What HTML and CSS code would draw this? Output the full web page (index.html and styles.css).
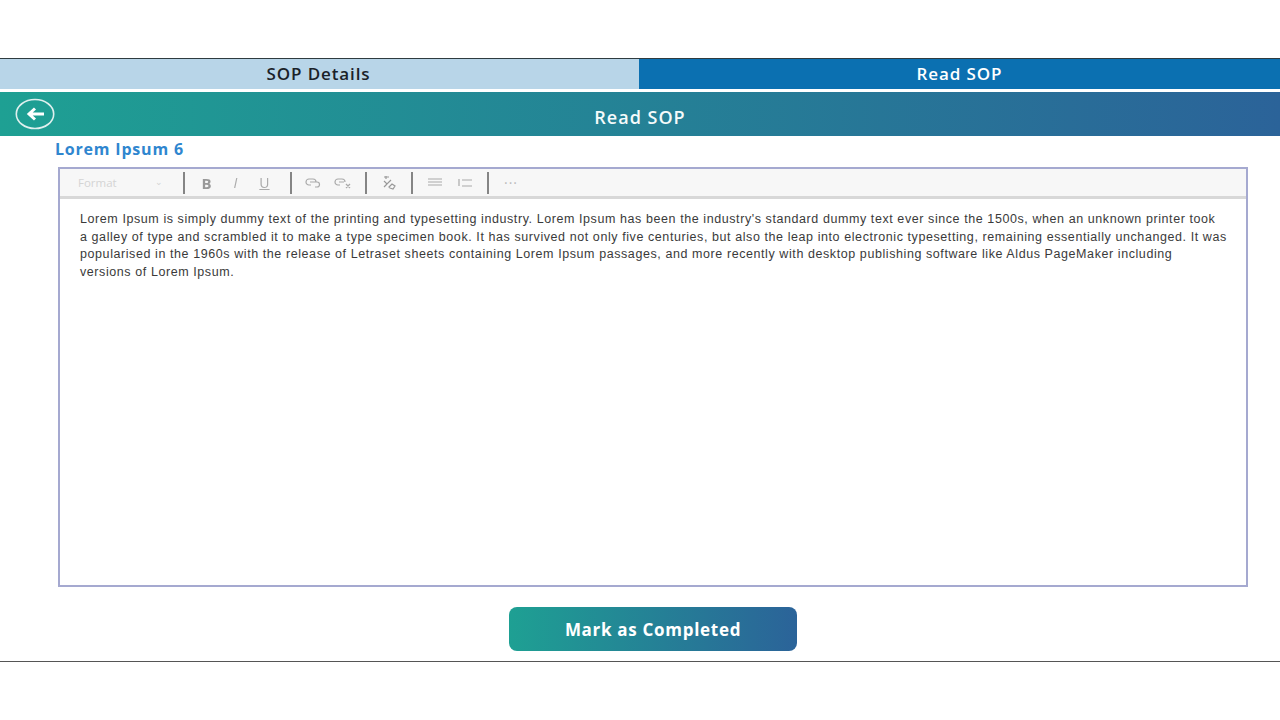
FILE: index.html
```html
<!DOCTYPE html>
<html lang="en">
<head>
  <meta charset="UTF-8">
  <meta name="viewport" content="width=device-width, initial-scale=1.0">
  <title>Read SOP</title>
  <link rel="stylesheet" href="styles.css">
</head>
<body>
  <div class="screen">
    <div class="tabs">
      <div class="tab tab-light">SOP Details</div>
      <div class="tab tab-active">Read SOP</div>
    </div>

    <div class="header">
      <button class="back" aria-label="Back">
        <svg width="40" height="32" viewBox="0 0 40 32">
          <ellipse cx="20" cy="16" rx="18.7" ry="14.5" fill="none" stroke="#dff0ee" stroke-width="1.6"/>
          <path d="M29 16H14M20 10.500L14 16l6 5.500" fill="none" stroke="#fff" stroke-width="3"/>
        </svg>
      </button>
      <div class="header-title">Read SOP</div>
    </div>

    <div class="doc-title">Lorem Ipsum 6</div>

    <div class="editor">
      <div class="toolbar">
        <div class="format">Format <span class="caret">&#8964;</span></div>
        <span class="sep"></span>
        <div class="tools tools-text">
          <b class="tool-b">B</b>
          <i class="tool-i">I</i>
          <u class="tool-u">U</u>
        </div>
        <span class="sep"></span>
        <div class="tools tools-link">
          <svg width="16" height="12" viewBox="0 0 16 12" fill="none" stroke="#aaa" stroke-width="1.2">
            <path d="M6 8H4a3 3 0 0 1 0-6h4a3 3 0 0 1 3 3M5 5h5M10 5h2a2.500 2.500 0 0 1 0 5h-2"/>
          </svg>
          <svg width="18" height="12" viewBox="0 0 18 12" fill="none" stroke="#aaa" stroke-width="1.2">
            <path d="M6 8H4a3 3 0 0 1 0-6h4a3 3 0 0 1 3 3M5 5h5M12 7l4 4M16 7l-4 4"/>
          </svg>
        </div>
        <span class="sep"></span>
        <div class="tools tools-clear">
          <svg width="16" height="15" viewBox="0 0 16 15" fill="none" stroke="#999" stroke-width="1.2">
            <path d="M3 2h5M5 1v3M3 6l3 3 4-4M6 9l-3 3M8 12l3-3 3 2-2 3-3-1z"/>
          </svg>
        </div>
        <span class="sep"></span>
        <div class="tools tools-list">
          <svg width="16" height="10" viewBox="0 0 16 10" fill="none" stroke="#c4c4c4" stroke-width="1.500">
            <path d="M1 1h14M1 4h14M1 7h14"/>
          </svg>
          <svg width="16" height="10" viewBox="0 0 16 10" fill="none" stroke="#aaa" stroke-width="1.200">
            <path d="M5 2h10M5 8h10M2 1v7"/>
          </svg>
        </div>
        <span class="sep"></span>
        <div class="more">&middot;&middot;&middot;</div>
      </div>
      <div class="content">
        Lorem Ipsum is simply dummy text of the printing and typesetting industry. Lorem Ipsum has been the industry's standard dummy text ever since the 1500s, when an unknown printer took<br>
        a galley of type and scrambled it to make a type specimen book. It has survived not only five centuries, but also the leap into electronic typesetting, remaining essentially unchanged. It was<br>
        popularised in the 1960s with the release of Letraset sheets containing Lorem Ipsum passages, and more recently with desktop publishing software like Aldus PageMaker including<br>
        versions of Lorem Ipsum.
      </div>
    </div>

    <div class="actions">
      <button class="complete">Mark as Completed</button>
    </div>
  </div>
</body>
</html>
```

FILE: styles.css
```css
body {
  margin: 0;
  background: #fff;
  font-family: "Open Sans", "Liberation Sans", sans-serif;
}
.screen {
  margin-top: 58px;
  height: 604px;
  box-sizing: border-box;
  border-top: 1px solid #2f3b40;
  border-bottom: 1px solid #555;
  display: flex;
  flex-direction: column;
}
.tabs {
  display: flex;
  height: 30px;
}
.tab {
  display: flex;
  align-items: center;
  justify-content: center;
  padding-bottom: 2px;
  box-sizing: border-box;
  font-size: 17px;
  font-weight: 600;
  letter-spacing: 0.9px;
}
.tab-light {
  width: 639px;
  padding-right: 2px;
  background: #b8d5e8;
  color: #1a2228;
}
.tab-active {
  flex: 1;
  background: #0b70b1;
  color: #fff;
}
.header {
  position: relative;
  margin-top: 3px;
  height: 44px;
  box-sizing: border-box;
  padding-top: 5px;
  display: flex;
  align-items: center;
  justify-content: center;
  background: linear-gradient(90deg, #1ea093, #2b6399);
}
.back {
  position: absolute;
  left: 15px;
  top: 6px;
  padding: 0;
  border: none;
  background: none;
  width: 40px;
  height: 32px;
}
.header-title {
  color: #f4fbfb;
  font-size: 18px;
  font-weight: 600;
  letter-spacing: 1px;
}
.doc-title {
  margin: 5px 0 0 55px;
  height: 20px;
  line-height: 17px;
  color: #2f86cf;
  font-size: 16px;
  font-weight: 700;
  letter-spacing: 0.8px;
}
.editor {
  margin: 6px 32px 0 58px;
  height: 420px;
  box-sizing: border-box;
  border: 2px solid #a5a9d0;
  display: flex;
  flex-direction: column;
}
.toolbar {
  height: 30px;
  flex-shrink: 0;
  box-sizing: border-box;
  background: #f7f7f7;
  border-bottom: 3px solid #d8d8d8;
  display: flex;
  align-items: center;
  color: #aaa;
}
.format {
  width: 123px;
  padding-left: 18px;
  box-sizing: border-box;
  display: flex;
  justify-content: space-between;
  padding-right: 20px;
  font-size: 11.500px;
  color: #d4d4d4;
}
.caret {
  font-size: 9px;
}
.sep {
  width: 2px;
  height: 22px;
  background: #858585;
  flex-shrink: 0;
}
.tools {
  display: flex;
  align-items: center;
  justify-content: center;
  filter: blur(0.4px);
}
.tools-text {
  width: 105px;
  gap: 22px;
  font-size: 14px;
  padding-right: 4px;
  box-sizing: border-box;
}
.tool-b {
  color: #999;
  font-size: 15px;
}
.tool-i {
  color: #aaa;
  font-weight: 400;
}
.tool-u {
  color: #aaa;
  font-weight: 400;
}
.tools-link {
  width: 73px;
  gap: 13px;
}
.tools-clear {
  width: 44px;
}
.tools-list {
  width: 74px;
  gap: 14px;
}
.more {
  margin-left: 15px;
  font-size: 14px;
  letter-spacing: 1px;
  color: #bbb;
}
.content {
  padding: 12px 18px 0 20px;
  font-family: "Liberation Sans", Arial, sans-serif;
  font-size: 12.500px;
  line-height: 17.600px;
  letter-spacing: 0.580px;
  color: #3a3a3a;
}
.actions {
  margin-top: 20px;
  padding-left: 509px;
}
.complete {
  width: 288px;
  height: 44px;
  border: none;
  border-radius: 8px;
  background: linear-gradient(90deg, #1ea093, #2b6399);
  color: #fff;
  font-family: "Open Sans", sans-serif;
  font-size: 17px;
  font-weight: 700;
  letter-spacing: 0.700px;
}
```
